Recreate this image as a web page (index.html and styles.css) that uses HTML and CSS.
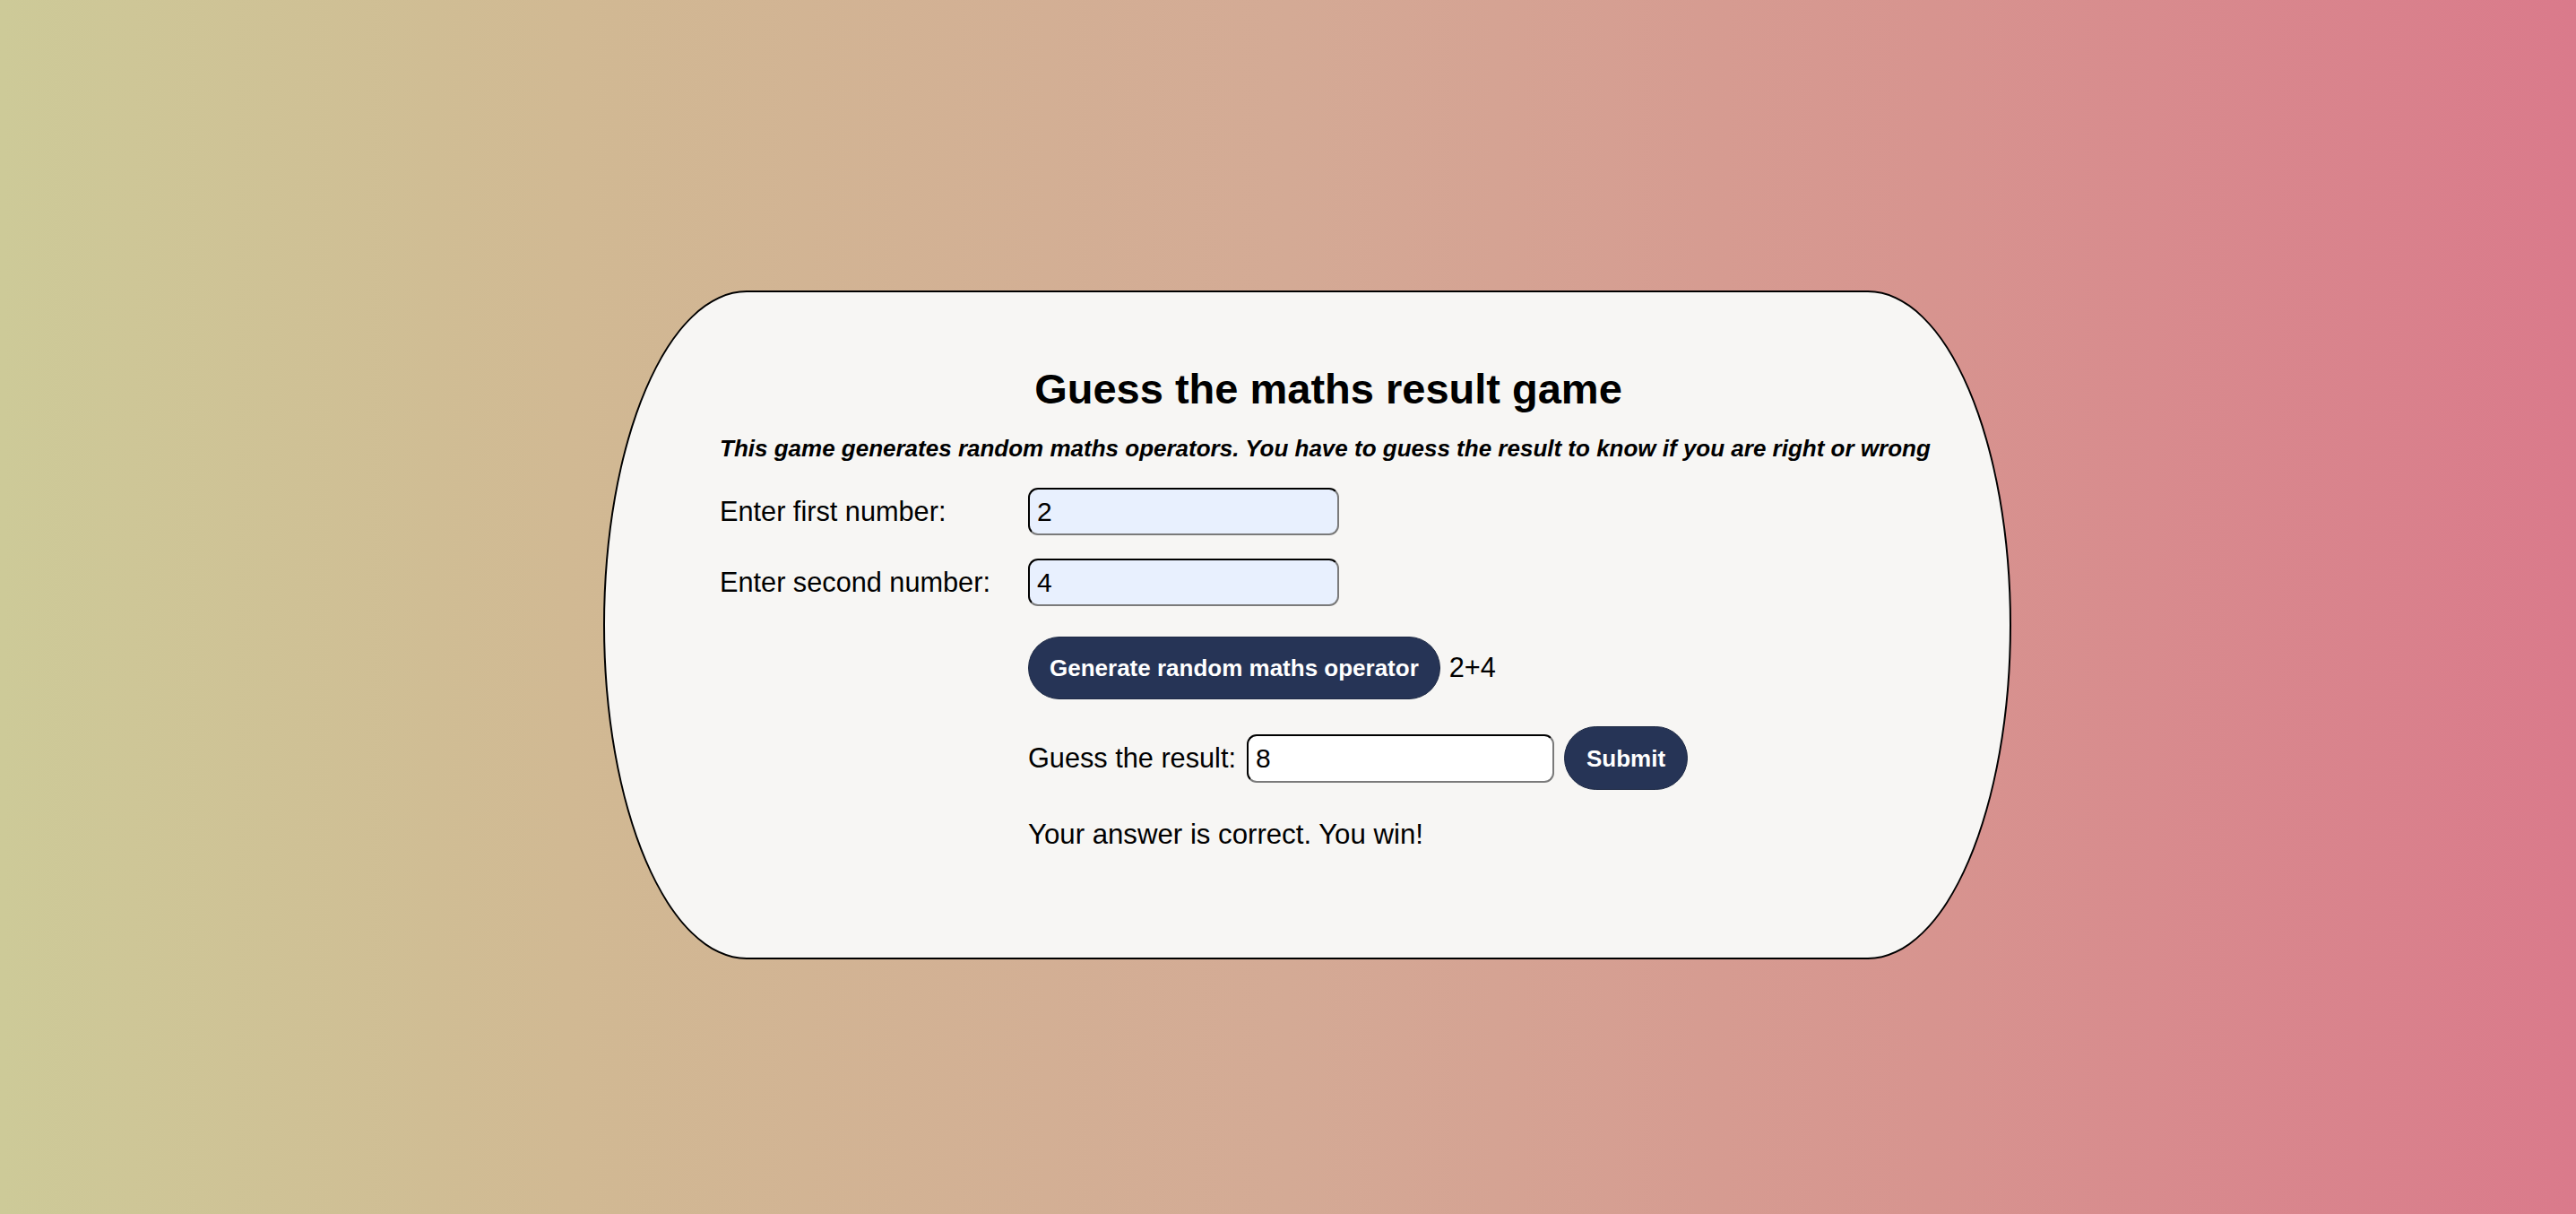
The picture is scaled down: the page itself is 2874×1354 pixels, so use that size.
FILE: index.html
```html
<!DOCTYPE html>
<html lang="en">
<head>
<meta charset="utf-8">
<title>Guess the maths result game</title>
<link rel="stylesheet" href="styles.css">
</head>
<body>
  <main class="card">
    <h1 class="title">Guess the maths result game</h1>
    <p class="intro">This game generates random maths operators. You have to guess the result to know if you are right or wrong</p>
    <div class="form">
      <label class="label" for="first">Enter first number:</label>
      <div class="field"><input class="input input-filled" id="first" type="text" value="2"></div>

      <label class="label" for="second">Enter second number:</label>
      <div class="field"><input class="input input-filled" id="second" type="text" value="4"></div>

      <div class="row row-generate">
        <button class="btn btn-generate" type="button">Generate random maths operator</button>
        <span class="expr">2+4</span>
      </div>

      <div class="row row-guess">
        <label class="guess-label" for="guess">Guess the result:</label>
        <input class="input input-guess" id="guess" type="text" value="8">
        <button class="btn btn-submit" type="button">Submit</button>
      </div>

      <p class="row result">Your answer is correct. You win!</p>
    </div>
  </main>
</body>
</html>
```

FILE: styles.css
```css
html, body {
  margin: 0;
  padding: 0;
}

body {
  min-height: 100vh;
  box-sizing: border-box;
  background: linear-gradient(to right, #cdca98 0%, #d1b993 22%, #d4aa95 50%, #d7948f 75%, #da7a8b 100%);
  font-family: "Liberation Sans", Arial, Helvetica, sans-serif;
  color: #000;
  display: flex;
  justify-content: center;
  align-items: flex-start;
  padding-top: 324px;
  padding-left: 43px;
}

.card {
  box-sizing: border-box;
  width: 1571px;
  height: 746px;
  background: #f7f6f4;
  border: 2px solid #000;
  border-radius: 160px / 50%;
  padding: 82px 81px 0 128px;
}

.title {
  margin: 0;
  font-size: 47px;
  line-height: 52px;
  font-weight: bold;
  text-align: center;
}

.intro {
  margin: 25px 0 0;
  font-size: 26px;
  line-height: 30px;
  font-weight: bold;
  font-style: italic;
  white-space: nowrap;
}

.form {
  margin-top: 29px;
  display: grid;
  grid-template-columns: 344px 1fr;
  row-gap: 26px;
  align-items: center;
  font-size: 30.7px;
}

.label {
  font-size: 30.7px;
  line-height: 36px;
}

.field {
  display: flex;
}

.input {
  box-sizing: border-box;
  width: 347px;
  height: 53px;
  margin: 0;
  padding: 0 8px;
  font-family: "Liberation Sans", Arial, Helvetica, sans-serif;
  font-size: 30px;
  color: #000;
  border-style: solid;
  border-width: 2px;
  border-color: #000 #7a7a7a #7a7a7a #000;
  border-radius: 11px;
  outline: none;
}

.input-filled {
  background: #e8f0fe;
}

.input-guess {
  width: 343px;
  height: 54px;
  background: #fff;
}

.row {
  grid-column: 2;
  display: flex;
  align-items: center;
}

.row-generate {
  margin-top: 8px;
  gap: 10px;
}

.row-guess {
  margin-top: 4px;
  gap: 12px;
}

.guess-label {
  line-height: 36px;
}

.row-guess .btn-submit {
  margin-left: -1px;
}

.btn {
  box-sizing: border-box;
  height: 70px;
  margin: 0;
  padding: 0 23px;
  border: 1px solid #1e2a45;
  border-radius: 36px;
  background: #263456;
  color: #fff;
  font-family: "Liberation Sans", Arial, Helvetica, sans-serif;
  font-size: 26px;
  font-weight: bold;
  line-height: 30px;
  cursor: pointer;
}

.btn-submit {
  height: 71px;
  padding: 0 24px;
}

.expr {
  line-height: 36px;
}

.result {
  margin: 6px 0 0;
  font-size: 31.2px;
  line-height: 36px;
}
```
